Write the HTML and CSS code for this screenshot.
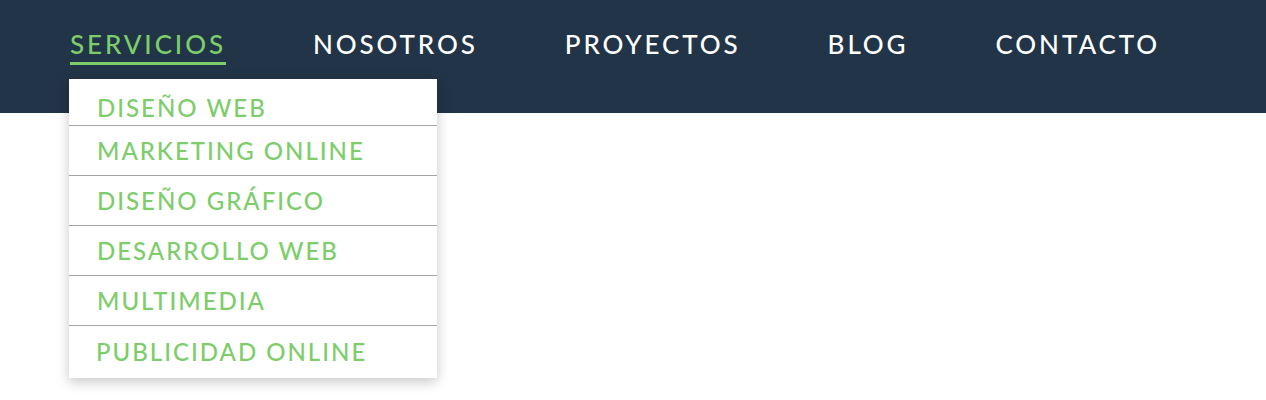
FILE: index.html
```html
<!DOCTYPE html>
<html lang="es">
<head>
<meta charset="utf-8">
<title>Menú</title>
<link rel="stylesheet" href="styles.css">
</head>
<body>
<header class="site-header">
  <nav class="main-nav">
    <ul class="nav-list">
      <li class="nav-item has-dropdown">
        <a class="nav-link active" href="#">SERVICIOS</a>
        <ul class="dropdown">
          <li class="dropdown-item first"><a href="#">DISEÑO WEB</a></li>
          <li class="dropdown-item"><a href="#">MARKETING ONLINE</a></li>
          <li class="dropdown-item"><a href="#">DISEÑO GRÁFICO</a></li>
          <li class="dropdown-item"><a href="#">DESARROLLO WEB</a></li>
          <li class="dropdown-item"><a href="#">MULTIMEDIA</a></li>
          <li class="dropdown-item last"><a href="#">PUBLICIDAD ONLINE</a></li>
        </ul>
      </li>
      <li class="nav-item"><a class="nav-link" href="#">NOSOTROS</a></li>
      <li class="nav-item"><a class="nav-link" href="#">PROYECTOS</a></li>
      <li class="nav-item"><a class="nav-link" href="#">BLOG</a></li>
      <li class="nav-item"><a class="nav-link" href="#">CONTACTO</a></li>
    </ul>
  </nav>
</header>
</body>
</html>
```
FILE: styles.css
```css
html, body {
  margin: 0;
  padding: 0;
  background: #ffffff;
}
body {
  min-height: 100vh;
  font-family: "Lato", "Noto Sans", sans-serif;
}
.site-header {
  position: relative;
  height: 113px;
  background: #223447;
}
.nav-list {
  list-style: none;
  margin: 0;
  padding: 26px 0 0 70px;
  display: flex;
  gap: 87px;
}
.nav-item {
  position: relative;
}
.nav-link {
  display: block;
  font-size: 26px;
  font-weight: 500;
  letter-spacing: 2.9px;
  line-height: 36px;
  color: #ffffff;
  text-decoration: none;
  border-bottom: 3px solid transparent;
}
.nav-link.active {
  color: #7dcd6b;
  border-bottom-color: #7dcd6b;
}
.dropdown {
  position: absolute;
  top: 53px;
  left: -1px;
  z-index: 10;
  width: 368px;
  margin: 0;
  padding: 0;
  list-style: none;
  background: #ffffff;
  box-shadow: 0 4px 12px rgba(0, 0, 0, 0.22);
}
.dropdown-item {
  border-bottom: 1px solid #a3a3a3;
}
.dropdown-item a {
  display: block;
  padding-left: 28px;
  font-size: 24px;
  font-weight: 500;
  letter-spacing: 2px;
  line-height: 49px;
  color: #7dcd6b;
  text-decoration: none;
}
.dropdown-item.first a {
  padding-top: 12px;
  line-height: 34px;
}
.dropdown-item.last {
  border-bottom: none;
}
.dropdown-item.last a {
  line-height: 52px;
  padding-left: 27px;
}
```
